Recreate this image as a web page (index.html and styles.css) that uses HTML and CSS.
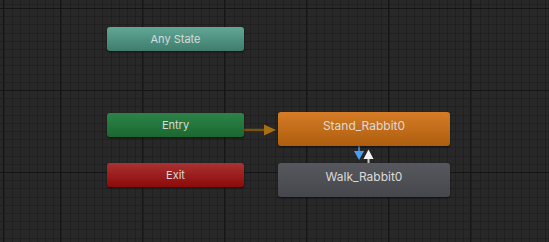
FILE: index.html
```html
<!DOCTYPE html>
<html lang="en">
<head>
    <meta charset="UTF-8">
    <meta name="viewport" content="width=device-width, initial-scale=1.0">
    <title>Animator</title>
    <link rel="stylesheet" href="styles.css">
</head>
<body>

    <div class="graph">
        <div class="grid-minor"></div>
        <div class="grid-major"></div>

        <!-- transitions -->
        <svg class="links" width="549" height="242" viewBox="0 0 549 242">
            <line x1="244" y1="130" x2="266" y2="130" stroke="#7a520f" stroke-width="2.5"/>
            <polygon points="264,124.5 276,130 264,135.5" fill="#a86e10"/>

            <line x1="359" y1="146" x2="359" y2="152" stroke="#3d7fc0" stroke-width="2"/>
            <polygon points="354,151 364,151 359,160" fill="#4a9ef0"/>

            <line x1="368.5" y1="158" x2="368.5" y2="163" stroke="#c8c8c8" stroke-width="2"/>
            <polygon points="363.5,159 373.5,159 368.5,149.5" fill="#f2f2f2"/>
        </svg>

        <div class="node any-state" style="left:107px; top:27px;">Any State</div>
        <div class="node entry" style="left:107px; top:113px;">Entry</div>
        <div class="node exit" style="left:107px; top:163px;">Exit</div>
        <div class="node state default" style="left:278px; top:112px;">Stand_Rabbit0</div>
        <div class="node state" style="left:278px; top:163px;">Walk_Rabbit0</div>
    </div>

</body>
</html>
```

FILE: styles.css
```css
body {
    margin: 0;
    padding: 0;
    background-color: #282828;
    font-family: 'Inter', 'Liberation Sans', sans-serif;
    overflow: hidden;
}

.graph {
    position: relative;
    width: 549px;
    height: 242px;
    background-color: #282828;
    overflow: hidden;
}

.grid-minor,
.grid-major {
    position: absolute;
    top: 0;
    left: 0;
    width: 100%;
    height: 100%;
}

.grid-minor {
    background-image:
        repeating-linear-gradient(to right, #202020 0, #202020 1px, transparent 1px, transparent 8.2px),
        repeating-linear-gradient(to bottom, #202020 0, #202020 1px, transparent 1px, transparent 8.2px);
    background-position: 4px 0, 0 8px;
}

.grid-major {
    background-image:
        repeating-linear-gradient(to right, #151515 0, #151515 1px, transparent 1px, transparent 82px),
        repeating-linear-gradient(to bottom, #151515 0, #151515 1px, transparent 1px, transparent 82px);
    background-position: 60px 0, 0 8px;
}

.links {
    position: absolute;
    top: 0;
    left: 0;
}

.node {
    position: absolute;
    width: 137px;
    height: 24px;
    line-height: 24px;
    text-align: center;
    font-size: 11px;
    color: #dadada;
    border-radius: 3px;
    box-shadow: 0 1px 2px rgba(0, 0, 0, 0.6);
}

.any-state {
    background: linear-gradient(to bottom, #62a795, #3e7d6c);
}

.entry {
    background: linear-gradient(to bottom, #2c8448, #1a6830);
}

.exit {
    background: linear-gradient(to bottom, #aa3232, #8c0a0a);
}

.state {
    width: 172px;
    height: 34px;
    line-height: 27px;
    font-size: 12px;
    background: linear-gradient(to bottom, #56585d, #45474c);
}

.state.default {
    background: linear-gradient(to bottom, #d67c26, #ad5e0e);
}
```
